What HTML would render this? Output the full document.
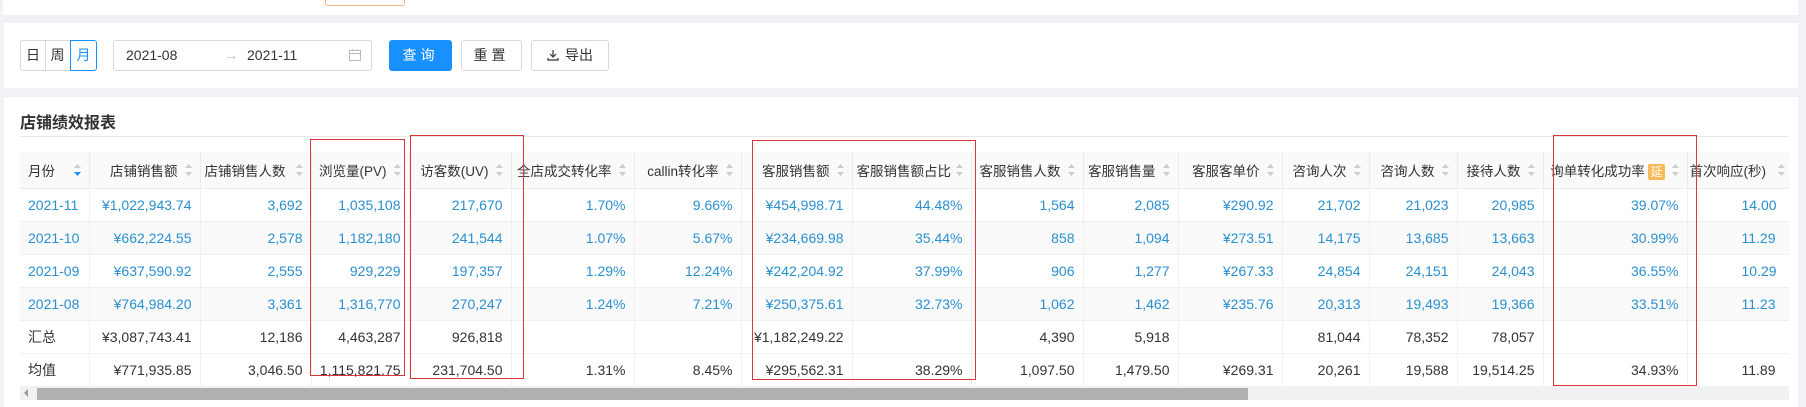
<!DOCTYPE html>
<html><head><meta charset="utf-8"><style>
*{box-sizing:border-box;margin:0;padding:0}
body{width:1806px;height:400px;overflow:hidden;background:#f0f2f5;font-family:"Liberation Sans","Noto Sans CJK SC",sans-serif;font-size:14px;color:#333;position:relative}
.card{position:absolute;background:#fff;left:4px;right:8px}
.btn{position:absolute;top:40px;height:31px;border:1px solid #d9d9d9;border-radius:3px;background:#fff;font-size:14px;line-height:29px;text-align:center;color:#333}
.seg{position:absolute;top:40px;height:31px;line-height:29px;border:1px solid #d9d9d9;text-align:center;font-size:14px}
table{border-collapse:collapse;table-layout:fixed;width:1817px}
.wrap{position:absolute;left:20px;top:152px;width:1769px;height:234px;overflow:hidden}
th{height:36px;background:#fafafa;font-weight:normal;font-size:13.5px;color:#333;border-right:1px solid #ececec;border-bottom:1px solid #ececec;white-space:nowrap;padding:0 22px 0 4px;text-align:right;position:relative;overflow:visible}
th.l{text-align:left;padding-left:8px}
th .s{position:absolute;right:8px;top:12px;width:7px;height:12px}
td{height:33px;text-align:right;padding:0 8px;border-right:1px solid #f0f0f0;border-bottom:1px solid #f0f0f0;white-space:nowrap;color:#2a8fcf;font-size:14px}
td.l{text-align:left}
tr.g td{background:#fafafa}
tr.k td{color:#333}
.rb{position:absolute;border:1px solid #d9363e}
</style></head><body>
<div class="card" style="top:0;height:15px;left:3px"></div>
<div style="position:absolute;left:325px;top:-4px;width:80px;height:10px;border:1px solid #f0b87a;border-radius:3px;background:#fff"></div>
<div class="card" style="top:23px;height:65px"></div>
<div class="seg" style="left:20px;width:26px;border-radius:3px 0 0 3px">日</div>
<div class="seg" style="left:45px;width:26px;border-left:none">周</div>
<div class="seg" style="left:70px;width:27px;border-color:#1890ff;color:#1890ff;border-radius:0 3px 3px 0">月</div>
<div class="btn" style="left:113px;width:259px;text-align:left">
<span style="position:absolute;left:12px">2021-08</span>
<span style="position:absolute;left:110px;color:#bbb">→</span>
<span style="position:absolute;left:133px">2021-11</span>
<svg style="position:absolute;left:235px;top:8px" width="12" height="12" viewBox="0 0 12 12"><rect x="0.5" y="1.5" width="11" height="10" fill="none" stroke="#bbb"/><line x1="0.5" y1="4.5" x2="11.5" y2="4.5" stroke="#bbb"/><line x1="3.5" y1="0" x2="3.5" y2="2" stroke="#bbb"/><line x1="8.5" y1="0" x2="8.5" y2="2" stroke="#bbb"/></svg>
</div>
<div class="btn" style="left:389px;width:63px;background:#1890ff;border-color:#1890ff;color:#fff;letter-spacing:4px">查询</div>
<div class="btn" style="left:461px;width:61px;letter-spacing:4px">重置</div>
<div class="btn" style="left:531px;width:78px"><svg width="12" height="12" viewBox="0 0 12 12" style="vertical-align:-1px;margin-right:6px"><path d="M6 1v7M3 5l3 3 3-3M1 9v2h10V9" fill="none" stroke="#333" stroke-width="1.2"/></svg>导出</div>
<div class="card" style="top:97px;height:310px"></div>
<div style="position:absolute;left:20px;top:109px;font-size:16px;font-weight:bold;color:#333">店铺绩效报表</div>
<div style="position:absolute;left:20px;top:136px;width:1769px;height:1px;background:#e8e8e8"></div>
<div class="wrap"><table>
<colgroup><col style="width:69px"><col style="width:111px"><col style="width:111px"><col style="width:98px"><col style="width:102px"><col style="width:123px"><col style="width:107px"><col style="width:111px"><col style="width:119px"><col style="width:112px"><col style="width:95px"><col style="width:104px"><col style="width:87px"><col style="width:88px"><col style="width:86px"><col style="width:144px"><col style="width:150px"></colgroup>
<tr>
<th class="l">月份<svg class="s" viewBox="0 0 7 12"><path d="M3.5 0L7 4H0z" fill="#ccc"/><path d="M3.5 12L7 8H0z" fill="#1890ff"/></svg></th>
<th>店铺销售额<svg class="s" viewBox="0 0 7 12"><path d="M3.5 0L7 4H0zM3.5 12L7 8H0z" fill="#ccc"/></svg></th>
<th style="text-align:left">店铺销售人数<svg class="s" viewBox="0 0 7 12"><path d="M3.5 0L7 4H0zM3.5 12L7 8H0z" fill="#ccc"/></svg></th>
<th>浏览量(PV)<svg class="s" viewBox="0 0 7 12"><path d="M3.5 0L7 4H0zM3.5 12L7 8H0z" fill="#ccc"/></svg></th>
<th>访客数(UV)<svg class="s" viewBox="0 0 7 12"><path d="M3.5 0L7 4H0zM3.5 12L7 8H0z" fill="#ccc"/></svg></th>
<th>全店成交转化率<svg class="s" viewBox="0 0 7 12"><path d="M3.5 0L7 4H0zM3.5 12L7 8H0z" fill="#ccc"/></svg></th>
<th>callin转化率<svg class="s" viewBox="0 0 7 12"><path d="M3.5 0L7 4H0zM3.5 12L7 8H0z" fill="#ccc"/></svg></th>
<th>客服销售额<svg class="s" viewBox="0 0 7 12"><path d="M3.5 0L7 4H0zM3.5 12L7 8H0z" fill="#ccc"/></svg></th>
<th>客服销售额占比<svg class="s" viewBox="0 0 7 12"><path d="M3.5 0L7 4H0zM3.5 12L7 8H0z" fill="#ccc"/></svg></th>
<th>客服销售人数<svg class="s" viewBox="0 0 7 12"><path d="M3.5 0L7 4H0zM3.5 12L7 8H0z" fill="#ccc"/></svg></th>
<th>客服销售量<svg class="s" viewBox="0 0 7 12"><path d="M3.5 0L7 4H0zM3.5 12L7 8H0z" fill="#ccc"/></svg></th>
<th>客服客单价<svg class="s" viewBox="0 0 7 12"><path d="M3.5 0L7 4H0zM3.5 12L7 8H0z" fill="#ccc"/></svg></th>
<th>咨询人次<svg class="s" viewBox="0 0 7 12"><path d="M3.5 0L7 4H0zM3.5 12L7 8H0z" fill="#ccc"/></svg></th>
<th>咨询人数<svg class="s" viewBox="0 0 7 12"><path d="M3.5 0L7 4H0zM3.5 12L7 8H0z" fill="#ccc"/></svg></th>
<th>接待人数<svg class="s" viewBox="0 0 7 12"><path d="M3.5 0L7 4H0zM3.5 12L7 8H0z" fill="#ccc"/></svg></th>
<th>询单转化成功率 <span style="background:#f8b959;color:#fff;font-size:12px;padding:1px 2px;border-radius:2px">延</span><svg class="s" viewBox="0 0 7 12"><path d="M3.5 0L7 4H0zM3.5 12L7 8H0z" fill="#ccc"/></svg></th>
<th style="text-align:left;padding-left:2px">首次响应(秒)<svg class="s" style="right:52px" viewBox="0 0 7 12"><path d="M3.5 0L7 4H0zM3.5 12L7 8H0z" fill="#ccc"/></svg></th>
</tr>
<tr><td class="l">2021-11</td><td>¥1,022,943.74</td><td>3,692</td><td>1,035,108</td><td>217,670</td><td>1.70%</td><td>9.66%</td><td>¥454,998.71</td><td>44.48%</td><td>1,564</td><td>2,085</td><td>¥290.92</td><td>21,702</td><td>21,023</td><td>20,985</td><td>39.07%</td><td style="text-align:left;padding-left:54px">14.00</td></tr>
<tr class="g"><td class="l">2021-10</td><td>¥662,224.55</td><td>2,578</td><td>1,182,180</td><td>241,544</td><td>1.07%</td><td>5.67%</td><td>¥234,669.98</td><td>35.44%</td><td>858</td><td>1,094</td><td>¥273.51</td><td>14,175</td><td>13,685</td><td>13,663</td><td>30.99%</td><td style="text-align:left;padding-left:54px">11.29</td></tr>
<tr><td class="l">2021-09</td><td>¥637,590.92</td><td>2,555</td><td>929,229</td><td>197,357</td><td>1.29%</td><td>12.24%</td><td>¥242,204.92</td><td>37.99%</td><td>906</td><td>1,277</td><td>¥267.33</td><td>24,854</td><td>24,151</td><td>24,043</td><td>36.55%</td><td style="text-align:left;padding-left:54px">10.29</td></tr>
<tr class="g"><td class="l">2021-08</td><td>¥764,984.20</td><td>3,361</td><td>1,316,770</td><td>270,247</td><td>1.24%</td><td>7.21%</td><td>¥250,375.61</td><td>32.73%</td><td>1,062</td><td>1,462</td><td>¥235.76</td><td>20,313</td><td>19,493</td><td>19,366</td><td>33.51%</td><td style="text-align:left;padding-left:54px">11.23</td></tr>
<tr class="k"><td class="l">汇总</td><td>¥3,087,743.41</td><td>12,186</td><td>4,463,287</td><td>926,818</td><td></td><td></td><td>¥1,182,249.22</td><td></td><td>4,390</td><td>5,918</td><td></td><td>81,044</td><td>78,352</td><td>78,057</td><td></td><td></td></tr>
<tr class="k"><td class="l">均值</td><td>¥771,935.85</td><td>3,046.50</td><td>1,115,821.75</td><td>231,704.50</td><td>1.31%</td><td>8.45%</td><td>¥295,562.31</td><td>38.29%</td><td>1,097.50</td><td>1,479.50</td><td>¥269.31</td><td>20,261</td><td>19,588</td><td>19,514.25</td><td>34.93%</td><td style="text-align:left;padding-left:54px">11.89</td></tr>
</table></div>
<div style="position:absolute;left:20px;top:386px;width:1769px;height:14px;background:#f1f1f1"></div>
<div style="position:absolute;left:37px;top:388px;width:1211px;height:12px;background:#b0b0b0"></div>
<div style="position:absolute;left:24px;top:389px;width:0;height:0;border-top:4px solid transparent;border-bottom:4px solid transparent;border-right:4px solid #999"></div>
<div class="rb" style="left:310px;top:139px;width:95px;height:237px"></div>
<div class="rb" style="left:410px;top:135px;width:114px;height:244px"></div>
<div class="rb" style="left:752px;top:140px;width:224px;height:240px"></div>
<div class="rb" style="left:1553px;top:135px;width:144px;height:251px"></div>
</body></html>
